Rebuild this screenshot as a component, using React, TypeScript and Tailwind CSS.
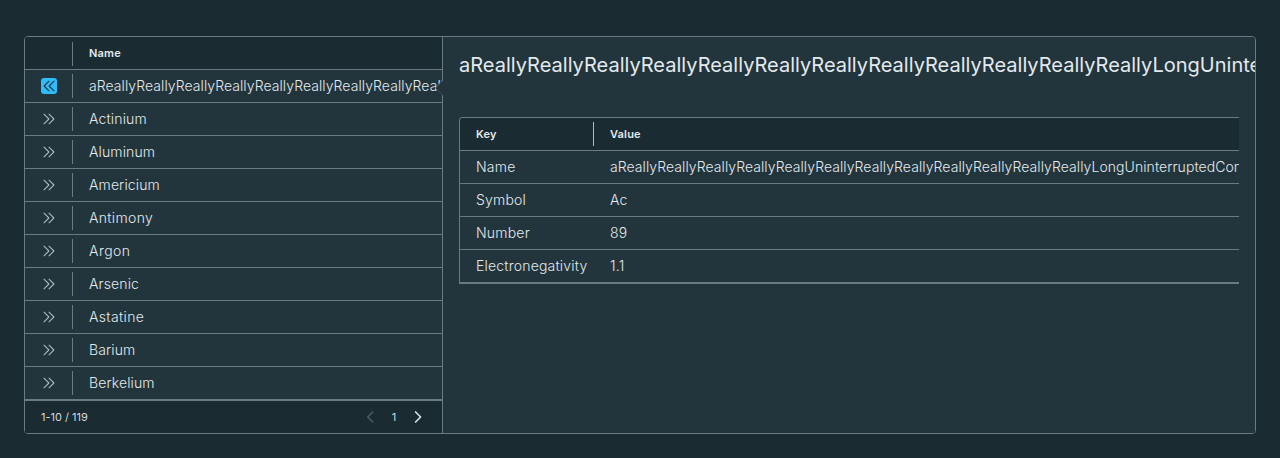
import React from "react";

const longName =
  "aReallyReallyReallyReallyReallyReallyReallyReallyReallyReallyReallyReallyLongUninterruptedContentString";

const elements = [
  { name: longName, tracking: "tracking-[0.07px]" },
  { name: "Actinium", tracking: "tracking-[0.16px]" },
  { name: "Aluminum", tracking: "tracking-[0.12px]" },
  { name: "Americium", tracking: "tracking-[0.12px]" },
  { name: "Antimony", tracking: "tracking-[0.34px]" },
  { name: "Argon", tracking: "tracking-[0.45px]" },
  { name: "Arsenic", tracking: "tracking-[0.12px]" },
  { name: "Astatine", tracking: "tracking-[0.35px]" },
  { name: "Barium", tracking: "tracking-[0.12px]" },
  { name: "Berkelium", tracking: "tracking-[0.12px]" },
];

const details = [
  { label: "Name", value: longName, tracking: "tracking-[0.07px]" },
  { label: "Symbol", value: "Ac", tracking: "tracking-[0.2px]" },
  { label: "Number", value: "89", tracking: "tracking-[0.2px]" },
  { label: "Electronegativity", value: "1.1", tracking: "tracking-[0.2px]" },
];

function DoubleAngle({ open }: { open: boolean }) {
  return (
    <svg
      viewBox="0 0 16 16"
      className={open ? "size-4 rotate-180 text-[#1b2b32]" : "size-4 text-[#adbbc4]"}
      fill="none"
      stroke="currentColor"
      strokeWidth="1.05"
      strokeLinecap="round"
      strokeLinejoin="round"
    >
      <path d="M3 3.2 L7.9 8 L3 12.8 M8 3.2 L12.9 8 L8 12.8" />
    </svg>
  );
}

function PageAngle({ left = false }: { left?: boolean }) {
  return (
    <svg
      viewBox="0 0 16 16"
      className={left ? "size-4 text-[#4d5f67]" : "size-4 text-[#d5dfe4]"}
      fill="none"
      stroke="currentColor"
      strokeWidth={left ? 1.4 : 1.7}
      strokeLinecap="round"
      strokeLinejoin="round"
    >
      <path d={left ? "M10.8 3 L5.7 8 L10.8 13" : "M5.6 3 L10.6 8 L5.6 13"} />
    </svg>
  );
}

export default function App() {
  return (
    <div className="h-[458px] overflow-hidden bg-[#1b2b32] px-6 pt-9 font-['Inter',sans-serif] text-[14px] font-light text-[#e3eaed]">
      <div className="flex h-[398px] overflow-hidden rounded-[4px] border border-[#6a7b82]">
        <section className="relative flex w-[418px] shrink-0 flex-col border-r border-[#6a7b82] bg-[#22343c]">
          <div className="flex h-[33px] items-center border-b border-[#6a7b82] bg-[#1b2b32]">
            <div className="mt-0.5 h-6 w-12 border-r border-[#6a7b82]" />
            <div className="pl-4 text-[11px] font-semibold tracking-[0.2px]">Name</div>
          </div>
          {elements.map(({ name, tracking }, i) => (
            <div key={name} className="flex h-[33px] shrink-0 items-center overflow-hidden border-b border-[#6a7b82]">
              <div className="flex h-6 w-12 shrink-0 items-center border-r border-[#6a7b82] pl-4">
                <span className={i === 0 ? "rounded-[3px] bg-[#2fbcfb]" : ""}>
                  <DoubleAngle open={i === 0} />
                </span>
              </div>
              <div className={`whitespace-nowrap pb-0.5 pl-4 ${tracking}`}>{name}</div>
            </div>
          ))}
          <div className="flex h-[33px] items-center border-t border-[#6a7b82] bg-[#1b2b32] px-4 text-[11px] font-normal text-[#d0dade]">
            <span className="grow">1-10 / 119</span>
            <PageAngle left />
            <span className="w-8 text-center">1</span>
            <PageAngle />
          </div>
          <svg viewBox="0 0 8 18" className="absolute -right-px top-[42px] h-[18px] w-2" fill="none">
            <path d="M8 1.5 L7 2 L0.5 9 L7 16 L8 16.5 Z" fill="#22343c" />
            <path d="M7.5 2 L0.7 9 L7.5 16" stroke="#425760" strokeWidth="0.8" />
          </svg>
        </section>
        <section className="min-w-0 grow bg-[#22343c] pl-4">
          <h1 className="mt-4 h-6 overflow-hidden whitespace-nowrap text-[20px] font-normal leading-6 tracking-[0.01px]">
            {longName}
          </h1>
          <div className="mr-4 mt-10 overflow-hidden rounded-tl-[4px] border-b-2 border-l border-t border-[#6a7b82]">
            <div className="flex h-[33px] items-center border-b border-[#6a7b82] bg-[#1b2b32] text-[11px] font-semibold tracking-[0.2px]">
              <div className="flex h-6 w-[134px] shrink-0 items-center border-r border-[#adbbc4] pl-4">Key</div>
              <div className="pl-4">Value</div>
            </div>
            {details.map(({ label, value, tracking }) => (
              <div key={label} className="flex h-[33px] items-center border-b border-[#6a7b82] last:h-8 last:border-b-0">
                <div className="w-[134px] shrink-0 pb-0.5 pl-4 tracking-[0.2px]">{label}</div>
                <div className={`whitespace-nowrap pb-0.5 pl-4 ${tracking}`}>{value}</div>
              </div>
            ))}
          </div>
        </section>
      </div>
    </div>
  );
}
